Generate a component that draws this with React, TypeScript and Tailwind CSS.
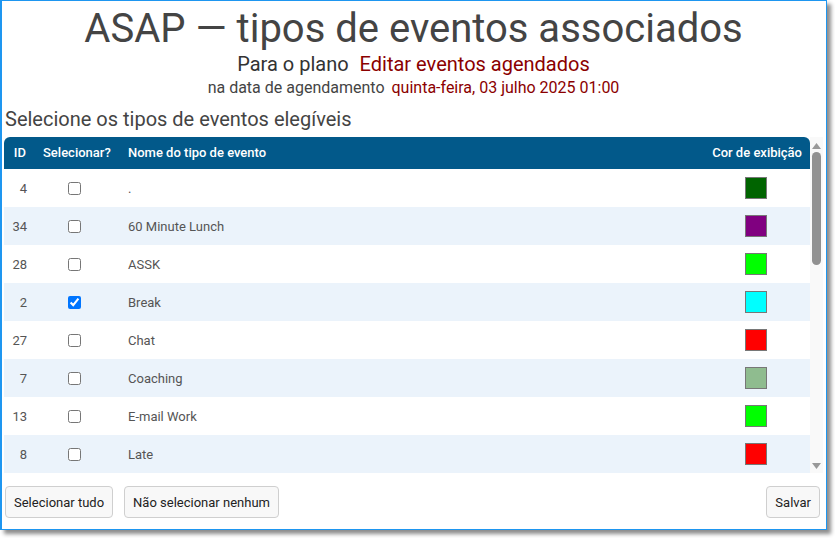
import React from 'react';

interface EventType {
  id: number;
  name: string;
  color: string;
  selected: boolean;
}

const eventTypes: EventType[] = [
  { id: 4, name: '.', color: '#006400', selected: false },
  { id: 34, name: '60 Minute Lunch', color: '#800080', selected: false },
  { id: 28, name: 'ASSK', color: '#00ff00', selected: false },
  { id: 2, name: 'Break', color: '#00ffff', selected: true },
  { id: 27, name: 'Chat', color: '#ff0000', selected: false },
  { id: 7, name: 'Coaching', color: '#8fbc8f', selected: false },
  { id: 13, name: 'E-mail Work', color: '#00ff00', selected: false },
  { id: 8, name: 'Late', color: '#ff0000', selected: false },
  { id: 41, name: 'Meeting', color: '#ffa500', selected: false },
];

const Button: React.FC<{ children: React.ReactNode }> = ({ children }) => (
  <button className="h-[32px] px-[8px] pt-[1px] rounded-[4px] border border-[#cfcfcf] bg-[#f8f8f8] text-[13px] leading-[16px] text-[#222] whitespace-nowrap">
    {children}
  </button>
);

export default function App() {
  return (
    <div className="w-[835px] h-[538px] bg-white" style={{ fontFamily: 'Roboto, "Liberation Sans", sans-serif' }}>
      <div className="w-[827px] h-[530px] flex flex-col border border-l-2 border-[#1e96f0] bg-white shadow-[4px_4px_4px_rgba(0,0,0,0.45)] pl-[2px] pr-[3px]">
        {/* Heading */}
        <h1 className="pt-[4px] text-center text-[40px] leading-[48px] text-[#444]">
          ASAP — tipos de eventos associados
        </h1>
        <p className="text-center text-[20px] leading-[23px] text-[#333]">
          Para o plano <span className="ml-[6px] text-[#8b0000]">Editar eventos agendados</span>
        </p>
        <p className="mt-[2px] text-center text-[16px] leading-[19px] text-[#444]">
          na data de agendamento <span className="ml-[3px] text-[#8b0000]">quinta-feira, 03 julho 2025 01:00</span>
        </p>
        <h2 className="mt-[11px] pl-[1px] text-[20px] leading-[23px] text-[#444]">
          Selecione os tipos de eventos elegíveis
        </h2>

        {/* Table with scrollbar */}
        <div className="mt-[6px] h-[336px] flex">
          <div className="flex-1 overflow-hidden">
            <div className="h-[32px] flex items-center bg-[#02598a] rounded-t-[6px] text-white text-[13px] font-medium">
              <div className="w-[32px] pr-[10px] text-right">ID</div>
              <div className="w-[77px] pl-[7px]">Selecionar?</div>
              <div className="flex-1 pl-[15px]">Nome do tipo de evento</div>
              <div className="w-[107px] pr-[8px] text-right">Cor de exibição</div>
            </div>
            {eventTypes.map((ev, i) => (
              <div
                key={ev.id}
                className={`h-[38px] flex items-center text-[13px] text-[#555] ${i % 2 === 1 ? 'bg-[#ebf3fb]' : 'bg-white'}`}
              >
                <div className="w-[32px] pr-[9px] pt-[1px] text-right">{ev.id}</div>
                <div className="w-[77px] flex justify-center">
                  <input type="checkbox" readOnly checked={ev.selected} className="w-[13px] h-[13px] m-0" />
                </div>
                <div className="flex-1 pl-[15px] pt-[1px]">{ev.name}</div>
                <div className="w-[107px] flex justify-center pr-[1px]">
                  <span className="w-[22px] h-[22px] border border-[#777]" style={{ backgroundColor: ev.color }} />
                </div>
              </div>
            ))}
          </div>
          {/* Scrollbar */}
          <div className="w-[13px] bg-[#f9f9f9] flex flex-col items-center">
            <svg width="9" height="6" viewBox="0 0 9 6" className="mt-[6px]">
              <path d="M4.5 0 L9 6 L0 6 Z" fill="#999" />
            </svg>
            <div className="mt-[3px] w-[9px] h-[113px] rounded-full bg-[#919191]" />
            <div className="flex-1" />
            <svg width="9" height="6" viewBox="0 0 9 6" className="mb-[4px]">
              <path d="M0 0 L9 0 L4.5 6 Z" fill="#999" />
            </svg>
          </div>
        </div>

        {/* Actions */}
        <div className="mt-[13px] flex items-center pl-[1px] pr-[3px]">
          <div className="flex gap-[11px]">
            <Button>Selecionar tudo</Button>
            <Button>Não selecionar nenhum</Button>
          </div>
          <div className="flex-1" />
          <Button>Salvar</Button>
        </div>
      </div>
    </div>
  );
}
